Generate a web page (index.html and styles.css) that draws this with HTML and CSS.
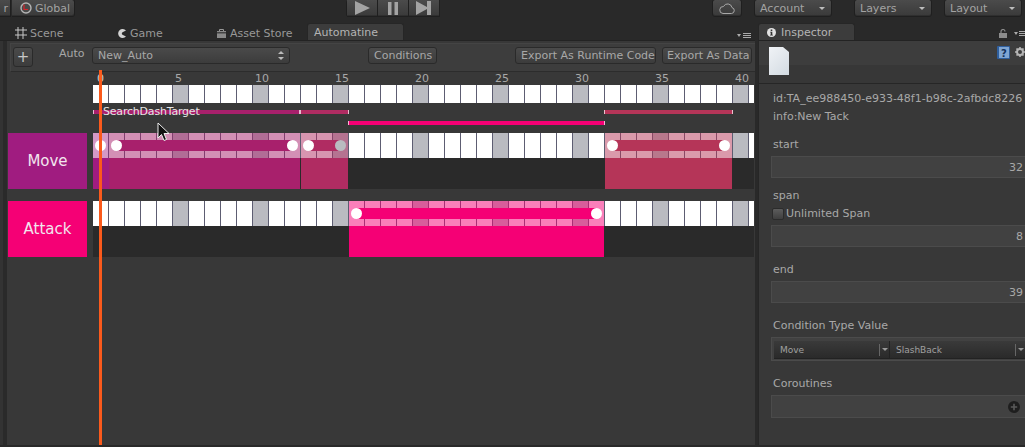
FILE: index.html
```html
<!DOCTYPE html>
<html lang="en">
<head>
    <meta charset="UTF-8">
    <meta name="viewport" content="width=device-width, initial-scale=1.0">
    <title>Automatine</title>
    <link rel="stylesheet" href="styles.css">
</head>
<body>
    <header class="toolbar">
        <div class="btn-group global-group">
            <div class="tool-btn layer-btn">r</div>
            <div class="tool-btn global-btn">
                <svg width="12" height="12" viewBox="0 0 12 12"><circle cx="6" cy="6" r="5" fill="#4a4a4a" stroke="#b5b5b5" stroke-width="1.400"/><path d="M4 2.500V7.500H8" fill="none" stroke="#d8232a" stroke-width="1.200"/></svg>
                Global
            </div>
        </div>
        <div class="btn-group play-group">
            <div class="tool-btn play-btn"><svg width="16" height="14" viewBox="0 0 16 14"><path d="M1 0l15 7-15 7z" fill="#a3a3a3"/></svg></div>
            <div class="tool-btn play-btn"><svg width="10" height="13" viewBox="0 0 10 13"><path d="M0 0h3.500v13H0zM6.500 0H10v13H6.500z" fill="#a3a3a3"/></svg></div>
            <div class="tool-btn play-btn"><svg width="16" height="14" viewBox="0 0 16 14"><path d="M0 0l11 6V0h4v14h-4V8L0 14z" fill="#a3a3a3"/></svg></div>
        </div>
        <div class="tool-btn cloud-btn">
            <svg width="16" height="11" viewBox="0 0 16 11"><path d="M4 10.500h8.500a3 3 0 0 0 .5-5.900A4.500 4.500 0 0 0 4.500 3.500 3.500 3.500 0 0 0 4 10.500z" fill="none" stroke="#a8a8a8"/></svg>
        </div>
        <div class="tool-btn menu-btn account-btn">Account<span class="caret"></span></div>
        <div class="tool-btn menu-btn layers-btn">Layers<span class="caret"></span></div>
        <div class="tool-btn menu-btn layout-btn">Layout<span class="caret"></span></div>
    </header>

    <div class="workspace">
        <section class="dock timeline-dock">
            <nav class="tabs">
                <div class="tab scene-tab">
                    <svg width="12" height="12" viewBox="0 0 12 12"><path d="M3 0v12M8 0v12M0 3h12M0 8h12" stroke="#c8c8c8" stroke-width="1" fill="none"/></svg>
                    Scene
                </div>
                <div class="tab game-tab">
                    <svg width="9" height="9" viewBox="0 0 9 9"><path d="M9 1.500A4.500 4.500 0 1 0 9 7.500L5.500 5.800a1.800 1.800 0 0 1 0-2.600z" fill="#d4d4d4"/></svg>
                    Game
                </div>
                <div class="tab store-tab">
                    <svg width="9" height="10" viewBox="0 0 9 10"><path d="M2.500 3V1.500h4V3" fill="none" stroke="#999"/><rect x="0" y="3" width="9" height="7" fill="#8a8a8a"/><rect x="0" y="4" width="9" height="1.500" fill="#444"/></svg>
                    Asset Store
                </div>
                <div class="tab tab-active">Automatine</div>
                <div class="dock-menu"><span class="menu-caret"></span><span class="menu-lines"></span></div>
            </nav>
            <div class="panel timeline-panel">
                <div class="panel-edge"></div>
                <div class="timeline-main">
                    <div class="auto-bar">
                        <div class="ctl-btn add-btn">+</div>
                        <span class="auto-label">Auto</span>
                        <div class="ctl-btn auto-select">New_Auto<span class="updown"></span></div>
                        <div class="ctl-btn conditions-btn">Conditions</div>
                        <div class="ctl-btn export-code-btn">Export As Runtime Code</div>
                        <div class="ctl-btn export-data-btn">Export As Data</div>
                    </div>

                    <div class="ruler">
                        <span class="tick tick-zero">0</span>
                        <span class="tick">5</span>
                        <span class="tick">10</span>
                        <span class="tick">15</span>
                        <span class="tick">20</span>
                        <span class="tick">25</span>
                        <span class="tick">30</span>
                        <span class="tick">35</span>
                        <span class="tick">40</span>
                    </div>
                    <div class="cells ruler-cells"></div>

                    <div class="tack-lines">
                        <div class="tack-line line-first"></div>
                        <div class="tack-line line-second"></div>
                        <div class="tack-line line-attack"></div>
                        <div class="tack-line line-fourth"></div>
                        <span class="tack-title">SearchDashTarget</span>
                    </div>

                    <div class="row">
                        <div class="row-label label-move">Move</div>
                        <div class="track">
                            <div class="cells"></div>
                            <div class="tack tack-a">
                                <div class="tack-glass"></div><div class="tack-body"></div>
                                <div class="tack-bar"><span class="handle"></span></div>
                            </div>
                            <div class="tack tack-b">
                                <div class="tack-glass"></div><div class="tack-body"></div>
                                <div class="tack-bar"><span class="handle"></span><span class="handle"></span></div>
                            </div>
                            <div class="tack tack-c">
                                <div class="tack-glass"></div><div class="tack-body"></div>
                                <div class="tack-bar"><span class="handle"></span><span class="handle handle-dim"></span></div>
                            </div>
                            <div class="tack tack-d">
                                <div class="tack-glass"></div><div class="tack-body"></div>
                                <div class="tack-bar"><span class="handle"></span><span class="handle"></span></div>
                            </div>
                        </div>
                    </div>

                    <div class="row">
                        <div class="row-label label-attack">Attack</div>
                        <div class="track">
                            <div class="cells"></div>
                            <div class="tack tack-e">
                                <div class="tack-glass"></div><div class="tack-body"></div>
                                <div class="tack-bar"><span class="handle"></span><span class="handle"></span></div>
                            </div>
                        </div>
                    </div>
                </div>

                <div class="playhead"></div>
                <svg class="mouse-cursor" width="13" height="20" viewBox="0 0 13 20"><path d="M1 1v15l3.500-3.500 2.500 6 2.500-1-2.500-6H12z" fill="#111" stroke="#eee" stroke-width="1"/></svg>
            </div>
        </section>

        <aside class="dock inspector-dock">
            <nav class="tabs">
                <div class="tab tab-active inspector-tab">
                    <svg width="9" height="9" viewBox="0 0 9 9"><circle cx="4.500" cy="4.500" r="4.500" fill="#e2e2e2"/><path d="M3.700 1.500h1.600v1.400H3.700zM3.200 3.700h2.100v3h.6v.9H3.100v-.9h.6V4.600h-.5z" fill="#333"/></svg>
                    Inspector
                </div>
                <div class="dock-tools">
                    <svg width="8" height="9" viewBox="0 0 8 9"><path d="M2 4V2.500a2 2 0 0 1 4 0" fill="none" stroke="#8c8c8c" stroke-width="1.200"/><rect y="4" width="8" height="5" fill="#8c8c8c"/></svg>
                    <span class="menu-caret"></span><span class="menu-lines"></span>
                </div>
            </nav>
            <div class="panel inspector-panel">
                <div class="inspector-head">
                    <div class="doc-icon"></div>
                    <svg class="help-icon" width="13" height="13" viewBox="0 0 13 13"><rect width="13" height="13" rx="1" fill="#2f5f9e"/><rect x="2" y="1" width="10" height="11" fill="#7fa5d2"/><text class="help-mark" x="7" y="10.500">?</text></svg>
                    <svg class="gear-icon" width="10" height="10" viewBox="0 0 10 10"><circle cx="5" cy="5" r="3" fill="none" stroke="#b5b5b5" stroke-width="2"/><path d="M5 0v2M5 8v2M0 5h2M8 5h2M1.500 1.500l1.400 1.400M7.100 7.100l1.400 1.400M1.500 8.500l1.400-1.400M7.100 2.900l1.400-1.400" stroke="#b5b5b5" stroke-width="1.600"/></svg>
                </div>
                <div class="inspector-body">
                    <div class="text-line">id:TA_ee988450-e933-48f1-b98c-2afbdc8226</div>
                    <div class="text-line">info:New Tack</div>

                    <div class="group group-start">
                        <div class="text-line">start</div>
                        <div class="field">32</div>
                    </div>
                    <div class="group group-span">
                        <div class="text-line">span</div>
                        <div class="check-row"><span class="checkbox"></span>Unlimited Span</div>
                        <div class="field field-close">8</div>
                    </div>
                    <div class="group">
                        <div class="text-line">end</div>
                        <div class="field">39</div>
                    </div>
                    <div class="group">
                        <div class="text-line">Condition Type Value</div>
                        <div class="select-box">
                            <div class="mini-select select-type">Move<span class="mini-caret"></span></div>
                            <div class="mini-select select-value">SlashBack<span class="mini-caret"></span></div>
                        </div>
                    </div>
                    <div class="group">
                        <div class="text-line">Coroutines</div>
                        <div class="field field-tall">
                            <svg width="12" height="12" viewBox="0 0 12 12"><circle cx="6" cy="6" r="6" fill="#1e1e1e"/><path d="M6 2.800v6.400M2.800 6h6.400" stroke="#5a5a5a" stroke-width="1.600"/></svg>
                        </div>
                    </div>
                </div>
            </div>
        </aside>
    </div>
</body>
</html>
```

FILE: styles.css
```css
* {
    box-sizing: border-box;
}

body {
    margin: 0;
    width: 1025px;
    height: 447px;
    overflow: hidden;
    background-color: #292929;
    color: #adadad;
    font-family: "DejaVu Sans", sans-serif;
    font-size: 11px;
}

/* top toolbar */
.toolbar {
    display: flex;
    height: 23px;
    align-items: flex-start;
    overflow: hidden;
}

.tool-btn {
    display: flex;
    align-items: center;
    height: 18px;
    margin-top: -1px;
    background: linear-gradient(#4b4b4b, #3a3a3a);
    border: 1px solid #1f1f1f;
    border-radius: 3px;
    color: #a3a3a3;
    box-shadow: inset 0 -1px 0 #2f2f2f;
}

.btn-group {
    display: flex;
}

.btn-group .tool-btn {
    border-radius: 0;
    border-left-width: 0;
}

.global-group {
    width: 75px;
}

.layer-btn {
    width: 11px;
    justify-content: flex-end;
    padding-right: 2px;
}

.btn-group .global-btn {
    flex: 1;
    gap: 3px;
    padding-left: 8px;
    border-radius: 0 3px 3px 0;
    margin-left: 1px;
}

.play-group {
    margin-left: 271px;
    border-left: 1px solid #1f1f1f;
    border-radius: 3px;
    height: 17px;
}

.play-btn {
    width: 31px;
    justify-content: center;
}

.cloud-btn {
    width: 30px;
    margin-left: 272px;
    justify-content: center;
}

.menu-btn {
    width: 78px;
    padding: 0 6px 0 5px;
    justify-content: space-between;
}

.account-btn {
    margin-left: 12px;
}

.layers-btn {
    margin-left: 22px;
}

.layout-btn {
    margin-left: 12px;
}

.caret {
    width: 0;
    height: 0;
    border-left: 3px solid transparent;
    border-right: 3px solid transparent;
    border-top: 3px solid #bdbdbd;
}

/* docks and tabs */
.workspace {
    display: flex;
    height: 424px;
}

.dock {
    display: flex;
    flex-direction: column;
}

.timeline-dock {
    width: 755px;
    margin-right: 3px;
}

.inspector-dock {
    width: 267px;
    overflow: hidden;
}

.tabs {
    display: flex;
    height: 17px;
    flex-shrink: 0;
}

.tab {
    display: flex;
    align-items: center;
    width: 100px;
    gap: 4px;
    padding-top: 3px;
    color: #989898;
    white-space: nowrap;
}

.scene-tab {
    margin-left: 7px;
    padding-left: 8px;
    gap: 3px;
}

.game-tab,
.store-tab {
    padding-left: 10px;
}

.tab-active {
    width: 97px;
    padding-left: 6px;
    padding-top: 1px;
    background-color: #3c3c3c;
    border: 1px solid #262626;
    border-bottom: 0;
    border-radius: 3px 3px 0 0;
    color: #b4b4b4;
}

.inspector-tab {
    padding-left: 8px;
    gap: 5px;
}

.dock-menu {
    display: flex;
    align-items: center;
    gap: 1px;
    margin-left: auto;
    margin-right: 4px;
    padding-top: 7px;
}

.dock-tools {
    display: flex;
    align-items: center;
    margin-left: auto;
    padding-top: 3px;
    margin-right: -2px;
}

.dock-tools svg {
    margin-right: 7px;
}

.menu-caret {
    width: 0;
    height: 0;
    border-left: 2px solid transparent;
    border-right: 2px solid transparent;
    border-top: 3px solid #aaa;
    margin-right: 1px;
}

.menu-lines {
    width: 8px;
    height: 5px;
    border-top: 1px solid #aaa;
    border-bottom: 1px solid #aaa;
    background: linear-gradient(transparent 1px, #aaa 1px, #aaa 2px, transparent 2px);
}

.panel {
    flex: 1;
    background-color: #383838;
    border-top: 1px solid #232323;
    margin-bottom: 2px;
}

/* timeline */
.timeline-panel {
    position: relative;
    display: flex;
    overflow: hidden;
}

.panel-edge {
    width: 7px;
    flex-shrink: 0;
    background: linear-gradient(90deg, #333 3px, #2a2a2a 3px);
}

.timeline-main {
    flex: 1;
}

.auto-bar {
    display: flex;
    align-items: flex-start;
    height: 29px;
    margin-top: 2px;
    margin-left: 3px;
    padding-top: 3px;
    background-color: #3d3d3d;
    border-top: 1px solid #444;
    border-bottom: 1px solid #2c2c2c;
    border-left: 1px solid #444;
}

.ctl-btn {
    display: flex;
    align-items: center;
    height: 17px;
    padding: 0 5px;
    background: linear-gradient(#4a4a4a, #3c3c3c);
    border: 1px solid #2a2a2a;
    border-radius: 3px;
    color: #a8a8a8;
    white-space: nowrap;
}

.add-btn {
    width: 20px;
    height: 20px;
    margin-left: 2px;
    padding: 0;
    justify-content: center;
    font-size: 15px;
    color: #c8c8c8;
}

.auto-label {
    margin-left: 26px;
    width: 33px;
    color: #a8a8a8;
}

.auto-select {
    width: 198px;
    justify-content: space-between;
}

.updown {
    position: relative;
    width: 6px;
    height: 9px;
}

.updown::before,
.updown::after {
    content: "";
    position: absolute;
    left: 0;
    border-left: 3px solid transparent;
    border-right: 3px solid transparent;
}

.updown::before {
    top: 0;
    border-bottom: 3px solid #bbb;
}

.updown::after {
    bottom: 0;
    border-top: 3px solid #bbb;
}

.conditions-btn {
    width: 69px;
    margin-left: 78px;
}

.export-code-btn {
    width: 141px;
    margin-left: 78px;
}

.export-data-btn {
    width: 90px;
    margin-left: 6px;
    padding: 0 4px;
}

.ruler {
    display: flex;
    height: 13px;
    margin-left: 90px;
    line-height: 13px;
    color: #a8a8a8;
}

.tick {
    width: 80px;
    flex-shrink: 0;
}

.tick-zero {
    width: 78px;
    color: #d0d0d0;
}

/* white cells, grey every 5th. first layer keeps cell 0 white */
.cells {
    height: 25px;
    background-image:
        linear-gradient(90deg, #fff 15px, transparent 15px),
        repeating-linear-gradient(90deg, #babbc1 0 15px, transparent 15px 80px),
        repeating-linear-gradient(90deg, #fff 0 15px, #5d5d72 15px 16px);
}

.ruler-cells {
    height: 18px;
    margin-left: 86px;
    width: 661px;
}

.tack-lines {
    position: relative;
    height: 30px;
    margin-left: 86px;
    width: 661px;
}

.tack-line {
    position: absolute;
    height: 4px;
    top: 7px;
    border-left: 1px solid rgba(255, 255, 255, 0.7);
    border-right: 1px solid rgba(255, 255, 255, 0.7);
}

.line-first {
    left: 0;
    width: 207px;
    background-color: #a8206c;
}

.line-second {
    left: 207px;
    width: 49px;
    background-color: #b02c62;
}

.line-attack {
    left: 255px;
    width: 257px;
    top: 18px;
    background-color: #f50075;
}

.line-fourth {
    left: 511px;
    width: 129px;
    background-color: #b53558;
}

.tack-title {
    position: absolute;
    left: 10px;
    top: 2px;
    line-height: 14px;
    letter-spacing: -0.2px;
    color: #e4e4e4;
}

.row {
    display: flex;
    height: 56px;
    margin-bottom: 12px;
    margin-left: 1px;
}

.row-label {
    display: flex;
    align-items: center;
    justify-content: center;
    width: 79px;
    margin-right: 6px;
    color: #f2e6ee;
    font-size: 15px;
}

.label-move {
    background-color: #a01c80;
}

.label-attack {
    background-color: #f50075;
}

.track {
    position: relative;
    width: 661px;
    background-color: #2a2a2a;
}

.tack {
    position: absolute;
    top: 0;
    bottom: 0;
    display: flex;
    flex-direction: column;
}

.tack-glass {
    height: 25px;
}

.tack-body {
    flex: 1;
}

.tack-bar {
    position: absolute;
    top: 7px;
    left: 7px;
    right: 7px;
    height: 11px;
    display: flex;
    justify-content: space-between;
}

.handle {
    width: 11px;
    height: 11px;
    margin: 0 -5px;
    border-radius: 50%;
    background-color: #fff;
}

.handle-dim {
    background-color: #b9bcc0;
}

.tack-a {
    left: 0;
    width: 16px;
}

.tack-a .tack-glass {
    background-color: rgba(160, 28, 128, 0.45);
}

.tack-a .tack-body {
    background-color: #a01c80;
}

.tack-b {
    left: 16px;
    width: 191px;
}

.tack-b .tack-glass {
    background-color: rgba(168, 32, 108, 0.5);
}

.tack-b .tack-bar,
.tack-b .tack-body {
    background-color: #a8206c;
}

.tack-c {
    left: 208px;
    width: 47px;
}

.tack-c .tack-glass {
    background-color: rgba(176, 44, 98, 0.5);
}

.tack-c .tack-bar,
.tack-c .tack-body {
    background-color: #b02c62;
}

.tack-d {
    left: 512px;
    width: 127px;
}

.tack-d .tack-glass {
    background-color: rgba(181, 53, 88, 0.5);
}

.tack-d .tack-bar,
.tack-d .tack-body {
    background-color: #b53558;
}

.tack-e {
    left: 256px;
    width: 255px;
}

.tack-e .tack-glass {
    background-color: rgba(245, 0, 117, 0.5);
}

.tack-e .tack-bar,
.tack-e .tack-body {
    background-color: #f50075;
}

.playhead {
    position: absolute;
    left: 99px;
    top: 29px;
    bottom: 0;
    width: 3px;
    background-color: #fb5a1c;
}

.mouse-cursor {
    position: absolute;
    left: 157px;
    top: 81px;
}

/* inspector */
.inspector-panel {
    border-left: 1px solid #262626;
}

.inspector-head {
    position: relative;
    height: 43px;
    background: linear-gradient(#3d3d3d 24px, #373737 24px);
    border-bottom: 1px solid #262626;
}

.doc-icon {
    position: absolute;
    left: 10px;
    top: 6px;
    width: 20px;
    height: 28px;
    background: linear-gradient(135deg, #f0f3f6, #d3dbe2);
    clip-path: polygon(0 0, 70% 0, 100% 18%, 100% 100%, 0 100%);
}

.help-icon {
    position: absolute;
    left: 238px;
    top: 5px;
}

.help-mark {
    fill: #12315c;
    font-size: 10px;
    font-weight: bold;
    text-anchor: middle;
}

.gear-icon {
    position: absolute;
    left: 256px;
    top: 6px;
}

.inspector-body {
    padding: 5px 0 0 14px;
}

.text-line {
    height: 18px;
    line-height: 20px;
    color: #a8a8a8;
    white-space: nowrap;
}

.group {
    margin-top: 13px;
}

.group-start {
    margin-top: 10px;
}

.group-span {
    margin-top: 8px;
}

.field {
    display: flex;
    align-items: center;
    justify-content: flex-end;
    width: 254px;
    height: 22px;
    margin-top: 3px;
    margin-left: -2px;
    padding-right: 2px;
    background-color: #414141;
    border: 1px solid #4b4b4b;
    border-right: 0;
    color: #a8a8a8;
}

.field-close {
    margin-top: 2px;
}

.field-tall {
    height: 23px;
    padding-right: 5px;
}

.check-row {
    display: flex;
    align-items: center;
    height: 19px;
    color: #a8a8a8;
}

.checkbox {
    width: 12px;
    height: 12px;
    margin-left: -1px;
    margin-right: 2px;
    background: linear-gradient(#5c5c5c, #3f3f3f);
    border: 1px solid #2b2b2b;
    border-radius: 2px;
}

.select-box {
    display: flex;
    width: 254px;
    height: 24px;
    margin-top: 3px;
    margin-left: -2px;
    padding: 3px 0 3px 2px;
    background-color: #414141;
    border: 1px solid #4b4b4b;
    border-right: 0;
}

.mini-select {
    display: flex;
    align-items: center;
    justify-content: space-between;
    height: 18px;
    padding-left: 6px;
    background: linear-gradient(#3a3a3a, #2a2a2a);
    border-bottom: 1px solid #222;
    color: #a0a0a0;
    font-size: 9px;
}

.select-type {
    width: 116px;
    border-right: 1px solid #222;
}

.select-value {
    width: 135px;
}

.mini-caret {
    position: relative;
    width: 10px;
    height: 12px;
    border-left: 1px solid #666;
}

.mini-caret::after {
    content: "";
    position: absolute;
    left: 2px;
    top: 4px;
    border-left: 3px solid transparent;
    border-right: 3px solid transparent;
    border-top: 3px solid #999;
}
```
